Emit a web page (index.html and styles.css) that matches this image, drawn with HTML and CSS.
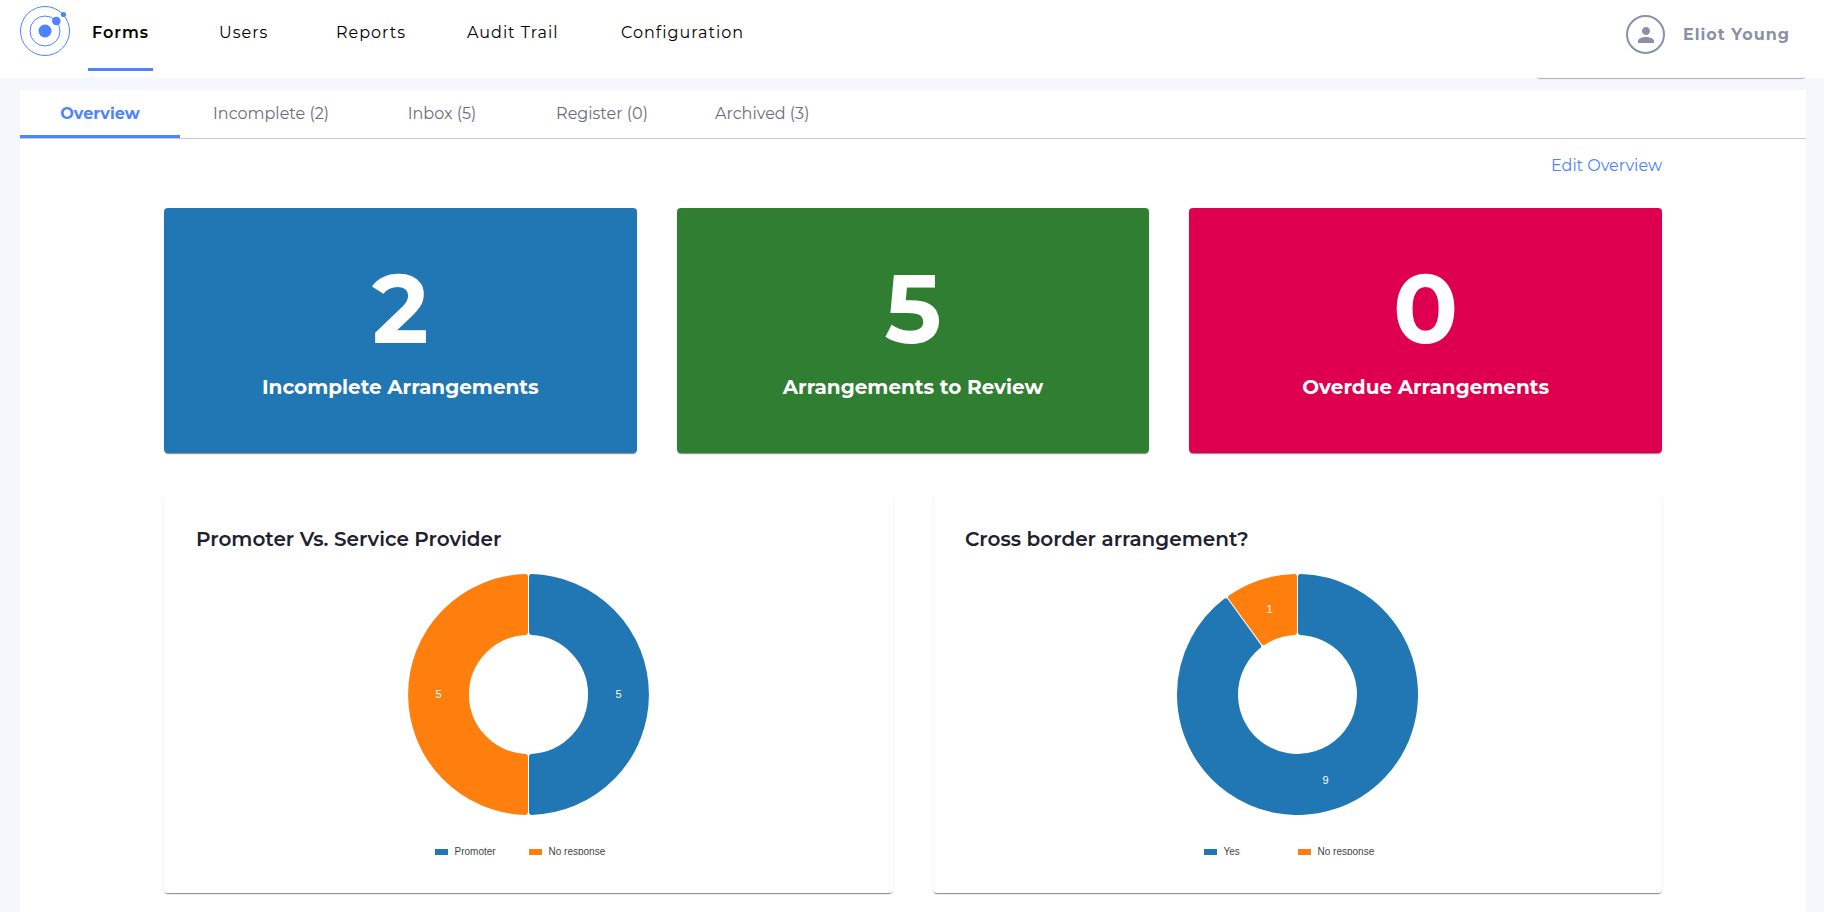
FILE: index.html
```html
<!DOCTYPE html>
<html lang="en">
<head>
<meta charset="utf-8">
<title>Forms Overview</title>
<link rel="stylesheet" href="styles.css">
</head>
<body>
<header class="topbar">
  <a class="logo" href="#" aria-label="Home">
    <svg width="52" height="52" viewBox="0 0 52 52" fill="#4d83ff">
      <g fill="none" stroke="#4d83ff"><circle cx="26" cy="26" r="24.5"/><circle cx="26" cy="26" r="15"/></g>
      <circle cx="26" cy="26" r="6.5"/><circle cx="37.3" cy="16" r="4.3"/><circle cx="44.5" cy="9.5" r="2.6"/>
    </svg>
  </a>
  <nav class="nav">
    <a class="nav-link active" href="#">Forms</a>
    <a class="nav-link" href="#">Users</a>
    <a class="nav-link" href="#">Reports</a>
    <a class="nav-link" href="#">Audit Trail</a>
    <a class="nav-link" href="#">Configuration</a>
  </nav>
  <button class="user" type="button">
    <span class="avatar">
      <svg width="24" height="24" viewBox="0 0 24 24" fill="currentColor"><path d="M12 12c2.21 0 4-1.79 4-4s-1.79-4-4-4-4 1.79-4 4 1.790 4 4 4zm0 2c-2.670 0-8 1.340-8 4v2h16v-2c0-2.660-5.330-4-8-4z"/></svg>
    </span>
    <span>Eliot Young</span>
  </button>
</header>
<main class="panel">
  <nav class="tabs">
    <a class="tab active" href="#">Overview</a>
    <a class="tab" href="#">Incomplete (2)</a>
    <a class="tab" href="#">Inbox (5)</a>
    <a class="tab" href="#">Register (0)</a>
    <a class="tab" href="#">Archived (3)</a>
  </nav>
  <div class="content">
    <div class="actions"><a class="edit" href="#">Edit Overview</a></div>
    <section class="stats">
      <article class="stat blue"><div class="num">2</div><div class="label">Incomplete Arrangements</div></article>
      <article class="stat green"><div class="num">5</div><div class="label">Arrangements to Review</div></article>
      <article class="stat red"><div class="num">0</div><div class="label">Overdue Arrangements</div></article>
    </section>
    <section class="charts">
      <article class="chart">
        <h2 class="title">Promoter Vs. Service Provider</h2>
        <svg class="donut" width="241" height="241" viewBox="0.5 0.5 241 241">
          <path class="slice-a" d="M124 3.04A118 118 0 0 1 124 238.96L124 182.93A62 62 0 0 0 124 59.07Z"/>
          <path class="slice-b" d="M118 3.04A118 118 0 0 0 118 238.96L118 182.93A62 62 0 0 1 118 59.07Z"/>
          <text x="211" y="124">5</text><text x="31" y="124">5</text>
        </svg>
        <ul class="legend"><li class="key">Promoter</li><li class="key alt">No response</li></ul>
      </article>
      <article class="chart">
        <h2 class="title">Cross border arrangement?</h2>
        <svg class="donut" width="241" height="241" viewBox="0.5 0.5 241 241">
          <path class="slice-a" d="M124 3.04A118 118 0 1 1 49.24 27.33L82.17 72.66A62 62 0 1 0 124 59.07Z"/>
          <path class="slice-b" d="M118 3.04A118 118 0 0 0 54.09 23.8L87.03 69.13A62 62 0 0 1 118 59.07Z"/>
          <text x="149" y="210">9</text><text x="93" y="39">1</text>
        </svg>
        <ul class="legend"><li class="key">Yes</li><li class="key alt">No response</li></ul>
      </article>
    </section>
  </div>
</main>
</body>
</html>
```
FILE: styles.css
```css
* { box-sizing: border-box; }
body {
  margin: 0;
  background: #f6f7fc;
  color: #000;
  font: 16px/20px Montserrat, Inter, sans-serif;
}
a { color: inherit; text-decoration: none; }
.topbar { display: flex; height: 78px; padding: 0 18px 0 19px; background: #fff; }
.logo { padding-top: 5px; }
.logo svg { display: block; }
.nav {
  display: grid;
  grid-template-columns: 127px 117px 131px 154px auto;
  justify-items: start;
  margin-left: 17px;
}
.nav-link { height: 71px; padding: 23px 4px 0; letter-spacing: 1px; }
.nav-link.active { border-bottom: 3px solid #4d83ff; font-weight: 600; }
.user {
  display: flex;
  align-items: center;
  gap: 18px;
  width: 270px;
  margin-left: auto;
  padding: 0 0 9px 90px;
  border: 0;
  border-radius: 4px;
  background: #fff;
  box-shadow: 0 2px 1px -1px rgba(0, 0, 0, .3);
  color: #8a90a6;
  font: inherit;
  font-weight: 700;
  letter-spacing: 1px;
  white-space: nowrap;
}
.avatar {
  display: grid;
  place-items: center;
  flex: none;
  width: 39px;
  height: 39px;
  border: 2px solid;
  border-radius: 50%;
}
.panel { margin: 12px 18px 0 20px; background: #fff; }
.tabs { display: flex; height: 49px; border-bottom: 1px solid #c9c9cc; }
.tab {
  min-width: 160px;
  padding: 14px 33px 0;
  color: #6e6e78;
  text-align: center;
}
.tab.active { border-bottom: 3px solid #4d83ff; color: #4d83ff; font-weight: 700; }
.content { padding: 0 144px 19px; }
.actions { padding: 17px 0 32px; text-align: right; }
.edit { color: #4d83ff; }
.stats { display: grid; grid-template-columns: repeat(3, 1fr); gap: 40px; }
.stat {
  padding: 50px 0 54px;
  border-radius: 4px;
  box-shadow: 0 2px 1px -1px rgba(0, 0, 0, .4), 0 1px 2px rgba(0, 0, 0, .12);
  color: #fff;
  text-align: center;
  font-weight: 700;
}
.blue { background: #2077b4; }
.green { background: #2f7e32; }
.red { background: #de004e; }
.num { font-size: 96px; line-height: 101px; }
.label { margin-top: 16px; font-size: 20px; line-height: 24px; }
.charts { display: grid; grid-template-columns: repeat(2, 1fr); gap: 40px; margin-top: 41px; }
.chart {
  padding: 32px 32px 38px;
  border-radius: 4px;
  background: #fff;
  box-shadow: 0 2px 1px -1px rgba(0, 0, 0, .4), 0 1px 2px rgba(0, 0, 0, .12);
}
.title { margin: 0; color: #20202f; font-size: 20px; line-height: 26px; font-weight: 600; }
.donut { display: block; margin: 22px auto 31px; }
.donut path { stroke-width: 5; stroke-linejoin: round; }
.slice-a { fill: #2077b4; stroke: #2077b4; }
.slice-b { fill: #ff7f0e; stroke: #ff7f0e; }
.donut text { fill: #fff; font: 11px "Liberation Sans", Arial, sans-serif; text-anchor: middle; }
.legend {
  display: grid;
  grid-template-columns: 94px 94px;
  justify-content: center;
  height: 9px;
  margin: 0;
  padding: 0;
  overflow: hidden;
  list-style: none;
  color: #444;
  font: 10px/12px "Liberation Sans", Arial, sans-serif;
}
.key { display: flex; gap: 7px; white-space: nowrap; }
.key::before { content: ""; width: 13px; height: 6px; margin-top: 3px; background: #2077b4; }
.key.alt::before { background: #ff7f0e; }
```
